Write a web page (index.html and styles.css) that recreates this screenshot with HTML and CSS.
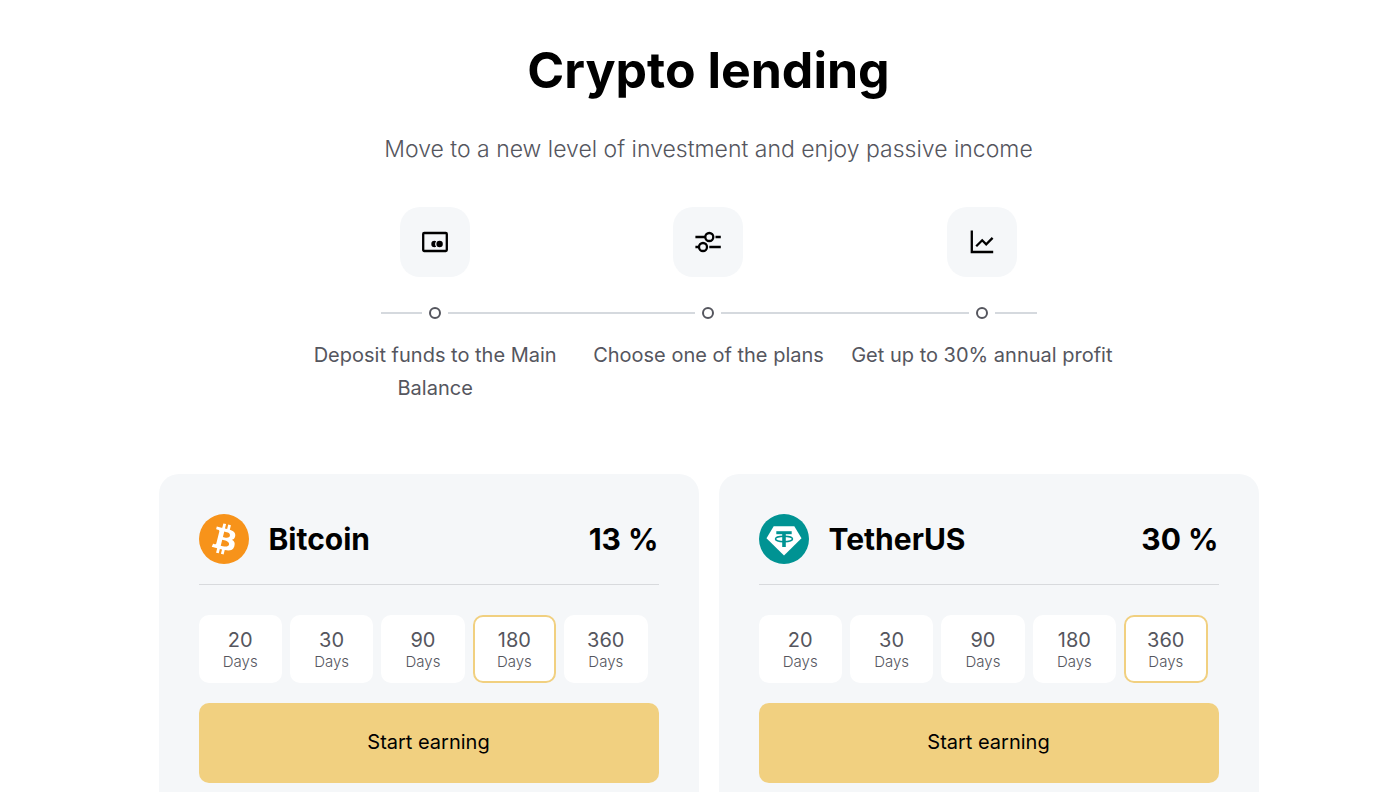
FILE: index.html
```
<!DOCTYPE html>
<html lang="en">
<head>
    <meta charset="UTF-8">
    <meta name="viewport" content="width=device-width, initial-scale=1.0">
    <title>Crypto lending</title>
    <link rel="stylesheet" href="styles.css">
</head>
<body>
    <main class="page">
        <header class="intro">
            <h1>Crypto lending</h1>
            <p>Move to a new level of investment and enjoy passive income</p>
        </header>

        <ol class="steps">
            <li class="step">
                <div class="step-icon">
                    <svg width="28" height="28" viewBox="0 0 28 28" fill="none" stroke="#000" stroke-width="2">
                        <rect x="2.2" y="5" width="23.6" height="18" rx="1" stroke-width="2.3"/>
                        <circle cx="18.6" cy="16" r="3.2" fill="#000" stroke="none"/>
                        <path d="M13.5 12.8a3.200 3.200 0 0 0 0 6.400l1.700-.4a4.500 4.500 0 0 1 0-5.600z" fill="#000" stroke="none"/>
                    </svg>
                </div>
                <div class="step-dot"><span></span></div>
                <p>Deposit funds to the Main Balance</p>
            </li>
            <li class="step">
                <div class="step-icon">
                    <svg width="28" height="28" viewBox="0 0 28 28" fill="none" stroke="#000" stroke-width="2.3">
                        <circle cx="15.3" cy="9" r="4"/>
                        <circle cx="9" cy="19" r="4"/>
                        <path d="M1.4 9h9.9M21.5 9h5.3M1.4 19H5M15.3 19h11.5"/>
                    </svg>
                </div>
                <div class="step-dot"><span></span></div>
                <p>Choose one of the plans</p>
            </li>
            <li class="step">
                <div class="step-icon">
                    <svg width="28" height="28" viewBox="0 0 28 28" fill="none" stroke="#000" stroke-width="2.3">
                        <path d="M3.8 2.5V24h21.4"/>
                        <path d="M8.2 18.3l6-6 4 4 6.4-6.4"/>
                    </svg>
                </div>
                <div class="step-dot"><span></span></div>
                <p>Get up to 30% annual profit</p>
            </li>
        </ol>

        <section class="plans">
            <form class="plan">
                <div class="plan-head">
                    <svg class="coin" viewBox="0 0 32 32">
                        <circle cx="16" cy="16" r="16" fill="#f7931a"/>
                        <path fill="#fff" fill-rule="evenodd" d="M23.189 14.02c.314-2.096-1.283-3.223-3.465-3.975l.708-2.84-1.728-.43-.69 2.765c-.454-.114-.92-.22-1.385-.326l.695-2.783L15.596 6l-.708 2.839c-.376-.086-.746-.17-1.104-.26l.002-.009-2.384-.595-.46 1.846s1.283.294 1.256.312c.7.175.826.638.805 1.006l-.806 3.235c.048.012.11.03.18.057l-.183-.045-1.13 4.532c-.086.212-.303.531-.793.41.018.025-1.256-.313-1.256-.313l-.858 1.978 2.25.561c.418.105.828.215 1.231.318l-.715 2.872 1.727.43.708-2.84c.472.127.93.245 1.378.357l-.706 2.828 1.728.43.715-2.866c2.948.558 5.164.333 6.097-2.333.752-2.146-.037-3.385-1.588-4.192 1.13-.26 1.98-1.003 2.207-2.538zm-3.95 5.538c-.533 2.147-4.148.986-5.32.695l.95-3.805c1.172.293 4.929.872 4.37 3.11zm.535-5.569c-.487 1.953-3.495.96-4.47.717l.86-3.45c.975.243 4.118.696 3.61 2.733z"/>
                    </svg>
                    <h2>Bitcoin</h2>
                    <strong>13 %</strong>
                </div>
                <div class="days">
                    <label class="day"><input type="radio" name="btc" value="20"><b>20</b><span>Days</span></label>
                    <label class="day"><input type="radio" name="btc" value="30"><b>30</b><span>Days</span></label>
                    <label class="day"><input type="radio" name="btc" value="90"><b>90</b><span>Days</span></label>
                    <label class="day"><input type="radio" name="btc" value="180" checked><b>180</b><span>Days</span></label>
                    <label class="day"><input type="radio" name="btc" value="360"><b>360</b><span>Days</span></label>
                </div>
                <button type="button" class="start">Start earning</button>
            </form>

            <form class="plan">
                <div class="plan-head">
                    <svg class="coin" viewBox="0 0 50 50">
                        <circle cx="25" cy="25" r="25" fill="#009393"/>
                        <path d="M14.7 12.3h20.6l7.2 12L25 41.500 7.500 24.300z" fill="#fff"/>
                        <g fill="none" stroke="#009393">
                            <path d="M17.300 18.700h15.400" stroke-width="3"/>
                            <path d="M25 18v15" stroke-width="3.600"/>
                            <ellipse cx="25" cy="25" rx="8.500" ry="2.700" stroke-width="1.500"/>
                        </g>
                    </svg>
                    <h2>TetherUS</h2>
                    <strong>30 %</strong>
                </div>
                <div class="days">
                    <label class="day"><input type="radio" name="usdt" value="20"><b>20</b><span>Days</span></label>
                    <label class="day"><input type="radio" name="usdt" value="30"><b>30</b><span>Days</span></label>
                    <label class="day"><input type="radio" name="usdt" value="90"><b>90</b><span>Days</span></label>
                    <label class="day"><input type="radio" name="usdt" value="180"><b>180</b><span>Days</span></label>
                    <label class="day"><input type="radio" name="usdt" value="360" checked><b>360</b><span>Days</span></label>
                </div>
                <button type="button" class="start">Start earning</button>
            </form>
        </section>
    </main>
</body>
</html>
```
FILE: styles.css
```
* {
    box-sizing: border-box;
}
body {
    margin: 0;
    background-color: #fff;
    color: #55565e;
    font-family: Inter, "Liberation Sans", sans-serif;
    overflow-x: hidden;
}
h1, h2, p {
    margin: 0;
}
.page {
    padding: 40px 0 0 35px;
}
.intro {
    text-align: center;
}
.intro h1 {
    color: #000;
    font-size: 50px;
    line-height: 60px;
    font-weight: 700;
}
.intro p {
    margin-top: 30px;
    font-size: 23px;
    line-height: 38px;
    font-weight: 300;
}
/* Steps */
.steps {
    position: relative;
    display: grid;
    grid-template-columns: repeat(3, 1fr);
    max-width: 820px;
    margin: 39px auto 0;
    padding: 0;
    list-style: none;
}
.steps::before {
    content: "";
    position: absolute;
    top: 105px;
    left: 10%;
    right: 10%;
    height: 2px;
    background-color: #d5d9de;
}
.step {
    position: relative;
    display: flex;
    flex-direction: column;
    align-items: center;
    text-align: center;
}
.step-icon {
    display: flex;
    align-items: center;
    justify-content: center;
    width: 70px;
    height: 70px;
    border-radius: 20px;
    background-color: #f5f7f9;
}
.step-dot {
    margin: 30px 0 20px;
    padding: 0 7px;
    background-color: #fff;
}
.step-dot span {
    display: block;
    width: 12px;
    height: 12px;
    border: 2px solid #55565e;
    border-radius: 50%;
}
.step p {
    padding: 0 5px;
    font-size: 20px;
    line-height: 33px;
}
/* Plans */
.plans {
    display: grid;
    grid-template-columns: 1fr 1fr;
    gap: 20px;
    max-width: 1100px;
    margin: 69px auto 0;
}
.plan {
    padding: 40px;
    border-radius: 20px;
    background-color: #f5f7f9;
}
.plan-head {
    display: flex;
    align-items: center;
    gap: 20px;
    padding-bottom: 20px;
    border-bottom: 1px solid #d8dadd;
    color: #000;
    font-size: 30px;
    line-height: 50px;
}
.plan-head h2 {
    flex: 1;
    font-size: 30px;
    font-weight: 700;
}
.plan-head strong {
    font-weight: 700;
}
.coin {
    width: 50px;
    height: 50px;
}
.days {
    display: grid;
    grid-template-columns: repeat(5, 1fr);
    gap: 8px;
    margin: 30px 0 20px;
    padding-right: 11px;
}
.day {
    position: relative;
    display: flex;
    flex-direction: column;
    align-items: center;
    height: 68px;
    padding-top: 11px;
    border: 2px solid #fff;
    border-radius: 10px;
    background-color: #fff;
    cursor: pointer;
}
.day input {
    position: absolute;
    opacity: 0;
    margin: 0;
}
.day b {
    font-size: 20px;
    line-height: 24px;
    font-weight: 400;
}
.day span {
    font-size: 15px;
    line-height: 20px;
    font-weight: 300;
}
.day:has(input:checked) {
    border-color: #f1d080;
}
.start {
    width: 100%;
    height: 80px;
    padding: 0 0 2px;
    border: none;
    border-radius: 10px;
    background-color: #f1d080;
    color: #000;
    font-family: inherit;
    font-size: 20px;
    cursor: pointer;
}
.start:hover {
    background-color: #e9c56d;
}
```
